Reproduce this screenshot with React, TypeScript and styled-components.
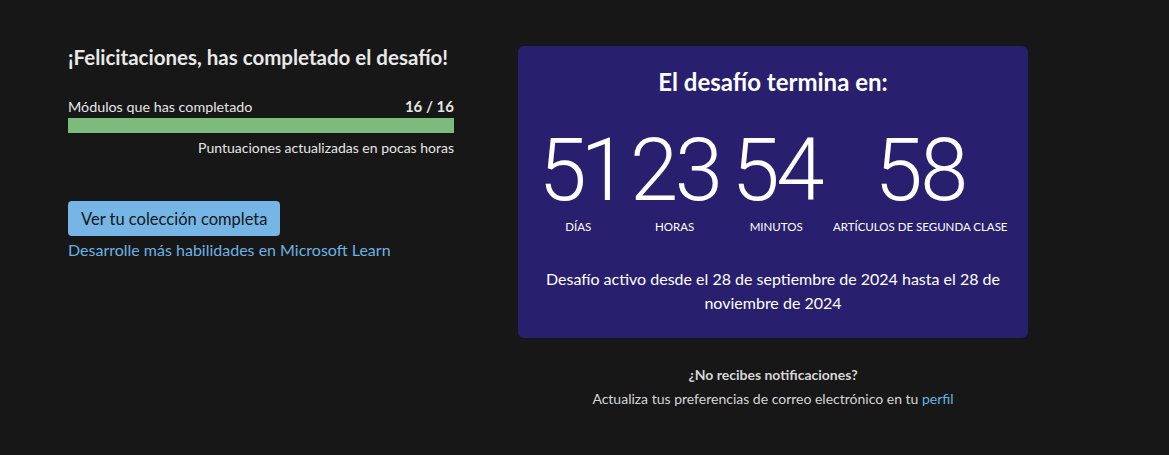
import React from 'react';
import styled, {createGlobalStyle} from "styled-components";

const GlobalStyle = createGlobalStyle`
  body {
    margin: 0;
    background: #171717;
    font-family: Lato, "Open Sans", sans-serif;
    color: #e6e6e6;
  }
`;

type CounterType = {
    value: string
    label: string
}

const counters: CounterType[] = [
    {value: '51', label: 'Días'},
    {value: '23', label: 'Horas'},
    {value: '54', label: 'Minutos'},
    {value: '58', label: 'Artículos de segunda clase'},
]

export default function App() {
    const completed = 16
    const total = 16

    return (
        <>
            <GlobalStyle/>
            <Page>
                <Progress>
                    <Title>¡Felicitaciones, has completado el desafío!</Title>
                    <ProgressHeader>
                        <span>Módulos que has completado</span>
                        <Count>{completed} / {total}</Count>
                    </ProgressHeader>
                    <Bar>
                        <BarFill style={{width: `${completed / total * 100}%`}}/>
                    </Bar>
                    <Note>Puntuaciones actualizadas en pocas horas</Note>
                    <CollectionButton>Ver tu colección completa</CollectionButton>
                    <LearnLink href="#">Desarrolle más habilidades en Microsoft Learn</LearnLink>
                </Progress>
                <Side>
                    <Card>
                        <CardTitle>El desafío termina en:</CardTitle>
                        <Counters>
                            {counters.map(c => (
                                <Counter key={c.label}>
                                    <Number>{c.value}</Number>
                                    <Label>{c.label}</Label>
                                </Counter>
                            ))}
                        </Counters>
                        <Dates>Desafío activo desde el 28 de septiembre de 2024 hasta el 28 de noviembre de 2024</Dates>
                    </Card>
                    <Notice>
                        <strong>¿No recibes notificaciones?</strong>
                        <span>Actualiza tus preferencias de correo electrónico en tu <Link href="#">perfil</Link></span>
                    </Notice>
                </Side>
            </Page>
        </>
    )
}

const Page = styled.main`
  display: flex;
  gap: 64px;
  padding: 46px 0 0 68px;
`;

const Progress = styled.section`
  width: 386px;
  display: flex;
  flex-direction: column;
`;

const Title = styled.h2`
  margin: -2px 0 0;
  font-size: 20.5px;
  font-weight: 700;
  line-height: 26px;
  color: #e8e8e8;
`;

const ProgressHeader = styled.div`
  display: flex;
  justify-content: space-between;
  align-items: baseline;
  margin-top: 27px;
  font-size: 14.3px;
  line-height: 18px;
  color: #e6e6e6;
`;

const Count = styled.span`
  font-size: 15px;
  font-weight: 700;
`;

const Bar = styled.div`
  height: 15px;
  margin-top: 2px;
  background: #2e2e2e;
`;

const BarFill = styled.div`
  height: 100%;
  background: #7cbb7b;
`;

const Note = styled.p`
  margin: 6px 0 0;
  text-align: right;
  font-size: 14px;
  line-height: 18px;
  color: #e6e6e6;
`;

const CollectionButton = styled.button`
  align-self: flex-start;
  margin-top: 44px;
  height: 35px;
  padding: 0 13px;
  border: none;
  border-radius: 4px;
  background: #75b6e7;
  color: #161616;
  font-family: inherit;
  font-size: 16.5px;
  cursor: pointer;
`;

const Link = styled.a`
  color: #6cb2e4;
  text-decoration: none;
`;

const LearnLink = styled(Link)`
  margin-top: 2px;
  font-size: 16px;
  line-height: 24px;
`;

const Side = styled.section`
  width: 510px;
  display: flex;
  flex-direction: column;
`;

const Card = styled.div`
  background: #281f6e;
  border-radius: 6px;
  padding: 20px 24px 23px;
  color: #fff;
  text-align: center;
`;

const CardTitle = styled.h2`
  margin: 0;
  font-size: 24px;
  font-weight: 700;
  line-height: 32px;
`;

const Counters = styled.div`
  display: flex;
  justify-content: center;
  gap: 12px;
  margin-top: 30px;
`;

const Counter = styled.div`
  display: flex;
  flex-direction: column;
  align-items: center;
`;

const Number = styled.span`
  font-family: Roboto, sans-serif;
  font-weight: 300;
  font-size: 87px;
  line-height: 84px;
  letter-spacing: -3.5px;
  font-feature-settings: "pnum";
`;

const Label = styled.span`
  margin-top: 8px;
  font-size: 11.5px;
  line-height: 14px;
  text-transform: uppercase;
  white-space: nowrap;
`;

const Dates = styled.p`
  margin: 33px 0 0;
  font-size: 16px;
  line-height: 24px;
`;

const Notice = styled.div`
  display: flex;
  flex-direction: column;
  align-items: center;
  gap: 6px;
  margin-top: 28px;
  font-size: 14px;
  line-height: 18px;
  color: #d6d6d6;
`;
